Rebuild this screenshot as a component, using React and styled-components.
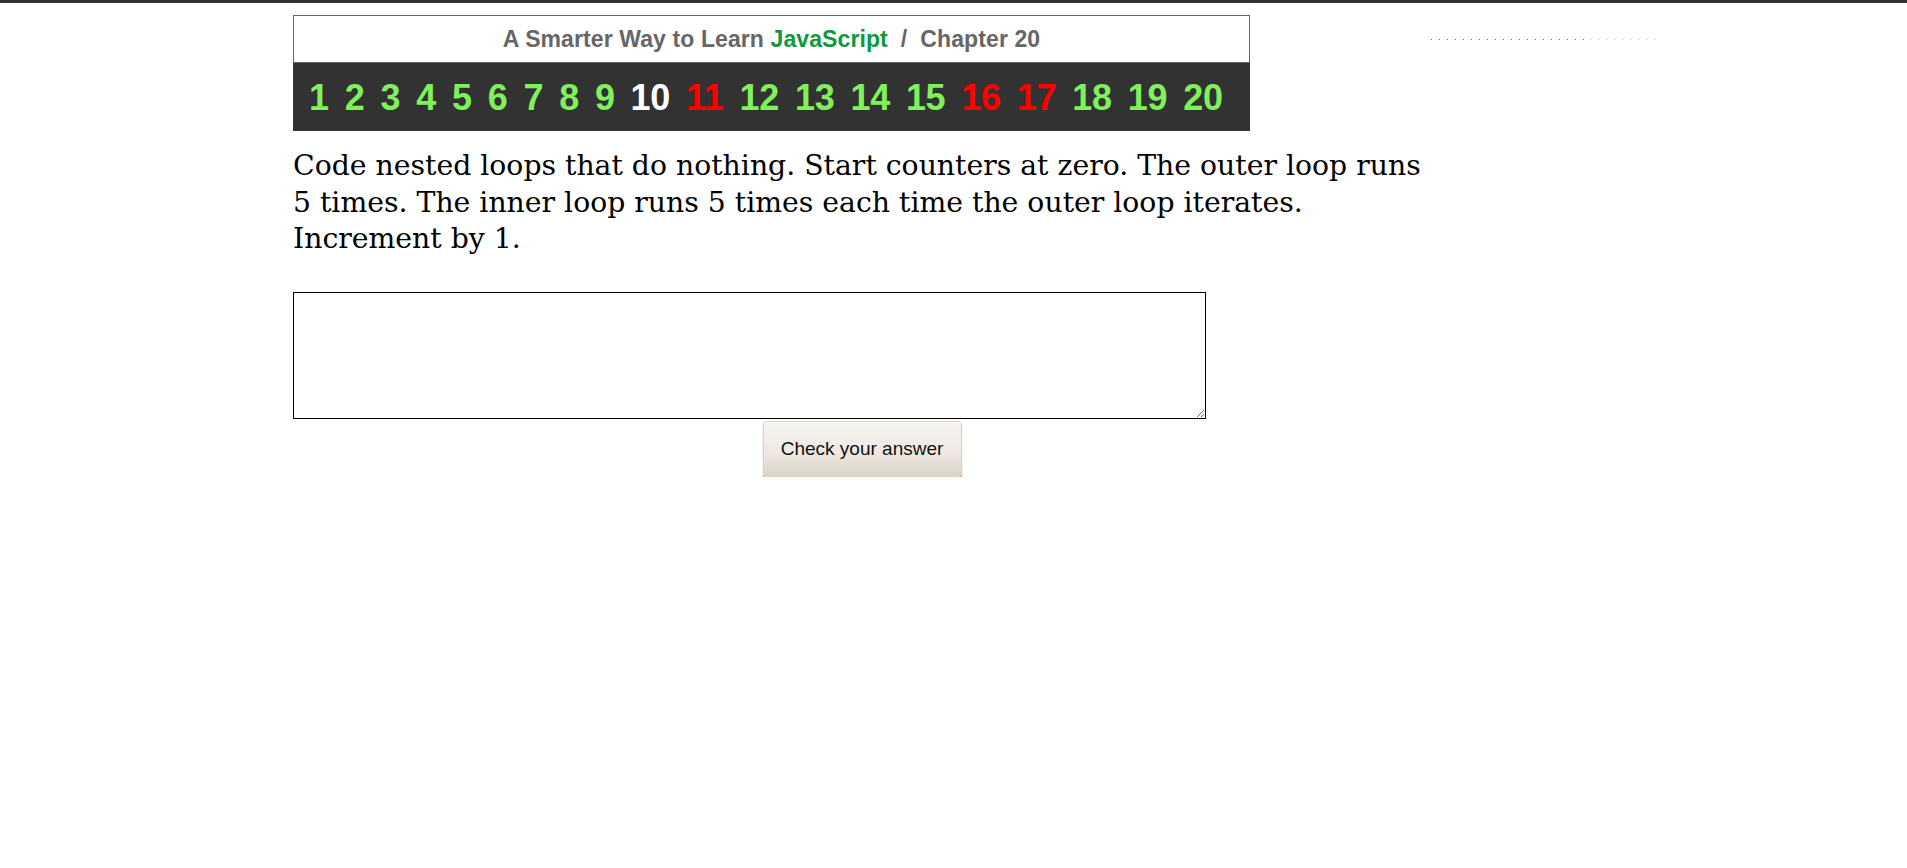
import React from 'react'
import styled, { createGlobalStyle } from 'styled-components'

const chapters = [
    { n: 1, state: 'done' }, { n: 2, state: 'done' }, { n: 3, state: 'done' },
    { n: 4, state: 'done' }, { n: 5, state: 'done' }, { n: 6, state: 'done' },
    { n: 7, state: 'done' }, { n: 8, state: 'done' }, { n: 9, state: 'done' },
    { n: 10, state: 'current' }, { n: 11, state: 'missed' }, { n: 12, state: 'done' },
    { n: 13, state: 'done' }, { n: 14, state: 'done' }, { n: 15, state: 'done' },
    { n: 16, state: 'missed' }, { n: 17, state: 'missed' }, { n: 18, state: 'done' },
    { n: 19, state: 'done' }, { n: 20, state: 'done' },
]

const numColors = {
    done: '#80f05c',
    current: '#ffffff',
    missed: '#ff0000',
}

///Styled Components

const GlobalStyle = createGlobalStyle`
    html, body {
        margin: 0;
        padding: 0;
        background: #fff;
    }
`

const TopBar = styled.div`
    height: 3px;
    background: #333;
`

const Page = styled.div`
    display: flex;
    margin-left: 293px;
`

const Main = styled.div`
    width: 1138px;
    display: flex;
    flex-direction: column;
`

const Side = styled.div`
    width: 226px;
    padding-top: 36px;
`

const DottedLine = styled.div`
    display: flex;
    height: 1px;
`

const Dots = styled.div`
    width: ${props => props.w}px;
    height: 1px;
    background: repeating-linear-gradient(to right, ${props => props.color} 0 1px, transparent 1px 8px);
`

const Header = styled.div`
    width: 957px;
    margin-top: 12px;
`

const HeaderTitle = styled.div`
    height: 46px;
    border: 1px solid #666;
    display: flex;
    align-items: center;
    justify-content: center;
    font-family: "Liberation Sans", Arial, sans-serif;
    font-weight: bold;
    font-size: 23px;
    letter-spacing: 0.1px;
    color: #666;
    white-space: pre;
`

const Lang = styled.span`
    color: #0c9a3a;
`

const NumberBar = styled.div`
    height: 68px;
    background: #323232;
    display: flex;
    align-items: center;
    padding-left: 16px;
    gap: 16px;
`

const ChapterLink = styled.a`
    font-family: "Liberation Sans", Arial, sans-serif;
    font-weight: bold;
    font-size: 36px;
    letter-spacing: -0.3px;
    text-decoration: none;
    color: ${props => numColors[props.state]};
    cursor: pointer;
    display: inline-block;
    transform: scaleY(1.05);
`

const Question = styled.p`
    margin: 17px 0 34px 0;
    font-family: "DejaVu Serif", Georgia, serif;
    font-size: 28.3px;
    line-height: 36.5px;
    color: #000;
`

const Answer = styled.textarea`
    display: block;
    box-sizing: border-box;
    width: 913px;
    height: 127px;
    margin: 0;
    border: 1px solid #000;
    font-family: "Liberation Mono", monospace;
    font-size: 16px;
`

const CheckButton = styled.button`
    align-self: center;
    margin-top: 2px;
    width: 199px;
    height: 56px;
    border: 1px solid #d8d1c8;
    border-radius: 4px;
    background: linear-gradient(to bottom, #f6f4f1 0%, #eee9e3 55%, #ddd3c8 100%);
    box-shadow: 0 2px 1px #9a9086, inset 0 1px 0 #fff;
    font-family: "Liberation Sans", Arial, sans-serif;
    font-size: 19px;
    color: #111;
    cursor: pointer;
    padding: 0;
`
///End of Styled Components

export default function App() {
    return (
        <>
            <GlobalStyle />
            <TopBar />
            <Page>
                <Main>
                    <Header>
                        <HeaderTitle>
                            A Smarter Way to Learn <Lang>JavaScript</Lang>  /  Chapter 20
                        </HeaderTitle>
                        <NumberBar>
                            {chapters.map(ch => (
                                <ChapterLink key={ch.n} state={ch.state}>{ch.n}</ChapterLink>
                            ))}
                        </NumberBar>
                    </Header>
                    <Question>
                        Code nested loops that do nothing. Start counters at zero. The outer loop runs 5 times. The inner loop runs 5 times each time the outer loop iterates. Increment by 1.
                    </Question>
                    <Answer />
                    <CheckButton>Check your answer</CheckButton>
                </Main>
                <Side>
                    <DottedLine>
                        <Dots w={160} color="#666" />
                        <Dots w={66} color="#ccc" />
                    </DottedLine>
                </Side>
            </Page>
        </>
    )
}
